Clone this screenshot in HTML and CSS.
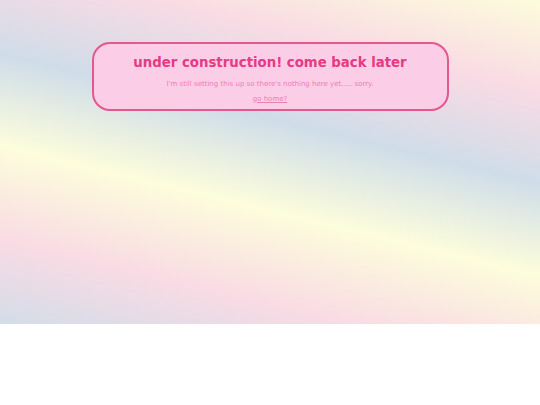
FILE: index.html
```html
<!DOCTYPE html>
<html>
<head>
<meta charset="utf-8">
<title>under construction</title>
<link rel="stylesheet" href="styles.css">
</head>
<body>
<div class="page">
  <div class="card">
    <h1 class="title">under construction! come back later</h1>
    <p class="note">I'm still setting this up so there's nothing here yet..... sorry.</p>
    <a class="home" href="#">go home?</a>
  </div>
</div>
</body>
</html>
```
FILE: styles.css
```css
html, body {
  margin: 0;
  padding: 0;
  background: #ffffff;
}
body {
  font-family: "DejaVu Sans", Verdana, sans-serif;
}
.page {
  height: 324px;
  padding-top: 42px;
  box-sizing: border-box;
  background: repeating-linear-gradient(193.5deg,
    #fdfddc -3px,
    #f9dbe4 89px,
    #cfdde9 179px,
    #fdfddc 267px);
}
.card {
  width: 357px;
  box-sizing: border-box;
  margin: 0 auto;
  border: 2px solid #e4588f;
  border-radius: 18px;
  background: #fbcde7;
  padding: 10.6px 10px 6.3px;
  display: flex;
  flex-direction: column;
  align-items: center;
  text-align: center;
}
.title {
  margin: 0;
  font-size: 13.3px;
  font-weight: bold;
  color: #e63a82;
  line-height: normal;
}
.note {
  margin: 10.1px 0 0;
  font-size: 7px;
  color: #ea80b7;
  line-height: normal;
}
.home {
  margin-top: 7.1px;
  font-size: 7px;
  color: #ea80b7;
  text-decoration: underline;
  line-height: normal;
}
```
